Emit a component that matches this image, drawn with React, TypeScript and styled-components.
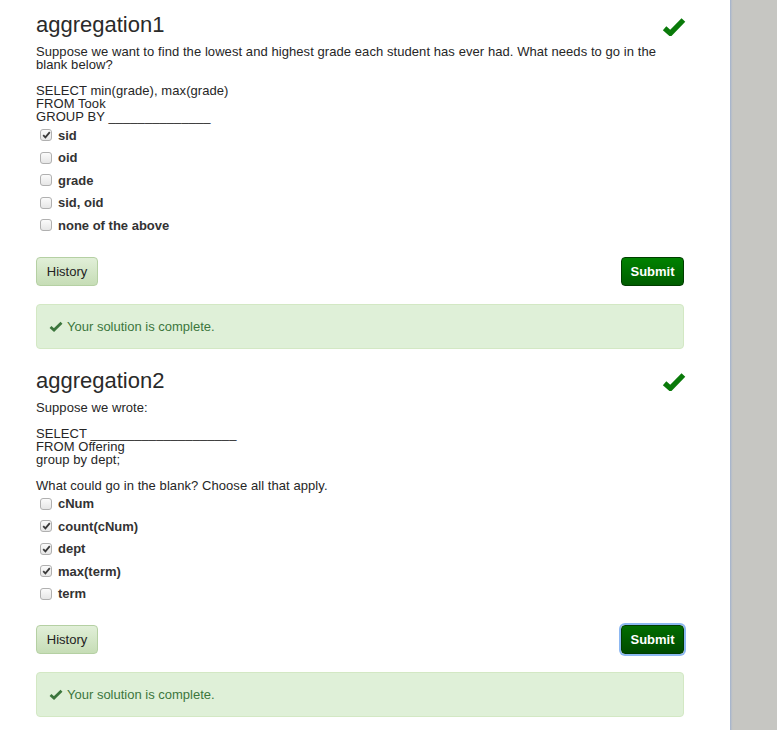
import React from "react";
import styled, { createGlobalStyle } from "styled-components";

const GlobalStyle = createGlobalStyle`
  html, body { margin: 0; padding: 0; }
  body {
    font-family: "Liberation Sans", Arial, Helvetica, sans-serif;
    color: #333;
    background: #c6c6c2;
  }
`;

const Page = styled.div`
  display: flex;
  min-height: 730px;
  height: 730px;
  overflow: hidden;
`;

const Main = styled.main`
  width: 730px;
  flex: none;
  box-sizing: border-box;
  background: #fff;
  padding: 0 46px 0 36px;
  display: flex;
  flex-direction: column;
  gap: 7px;
`;

const Sidebar = styled.aside`
  flex: 1;
  background: linear-gradient(to right, #9fb1cf 0, #b2bbc9 1px, #c1c3c4 2px, #c6c6c2 3px);
`;

const Question = styled.section`
  display: flex;
  flex-direction: column;
`;

const Header = styled.div`
  display: flex;
  align-items: center;
  justify-content: space-between;
  margin-top: 12px;
  height: 26px;
`;

const Title = styled.h3`
  margin: 0;
  font-size: 22px;
  line-height: 26px;
  font-weight: 400;
  color: #2a2a2a;
`;

const DoneIcon = styled.svg`
  width: 24px;
  height: 19px;
  margin-right: -2px;
  margin-top: 2px;
`;

const Prompt = styled.div`
  margin-top: 7px;
  font-size: 13px;
  line-height: 13px;
  letter-spacing: 0.07px;
  white-space: pre-line;
  color: #262626;
`;

const Options = styled.div`
  margin-top: 1px;
  display: flex;
  flex-direction: column;
`;

const Option = styled.label`
  display: flex;
  align-items: center;
  gap: 6px;
  height: 22.5px;
  padding-left: 4px;
  font-size: 13px;
  font-weight: 700;
  color: #333;
`;

const Box = styled.span`
  width: 12px;
  height: 12px;
  box-sizing: border-box;
  border: 1px solid #b0b0b0;
  border-radius: 3px;
  background: linear-gradient(#fbfbfb, #e6e6e6);
  display: flex;
  align-items: center;
  justify-content: center;
`;

const ButtonRow = styled.div`
  margin-top: 20px;
  display: flex;
  justify-content: space-between;
  align-items: center;
`;

const HistoryButton = styled.button`
  height: 29px;
  width: 62px;
  box-sizing: border-box;
  border: 1px solid #b5d0a3;
  border-radius: 4px;
  background: linear-gradient(#e1efd8, #c6ddb6);
  color: #222;
  font-family: inherit;
  font-size: 13px;
  padding: 0;
`;

const SubmitButton = styled.button<{ $focused?: boolean }>`
  height: 29px;
  width: 63px;
  box-sizing: border-box;
  border: 1px solid #003d00;
  border-radius: 4px;
  background: ${(p) =>
    p.$focused ? "linear-gradient(#006d00, #004a00)" : "linear-gradient(#008200, #005d00)"};
  box-shadow: ${(p) => (p.$focused ? "0 0 0 2px #8db8f2" : "none")};
  color: #fff;
  font-family: inherit;
  font-weight: 700;
  font-size: 13px;
  padding: 0;
`;

const Alert = styled.div`
  margin-top: 18px;
  box-sizing: border-box;
  height: 45px;
  border: 1px solid #d3e8c4;
  border-radius: 4px;
  background: #dff0d8;
  color: #3c763d;
  font-size: 13px;
  display: flex;
  align-items: center;
  gap: 4px;
  padding: 0 12px;
`;

const SmallCheck = styled.svg`
  width: 14px;
  height: 11px;
`;

type Opt = { label: string; checked: boolean };

const CheckMark = () => (
  <svg width="9" height="8" viewBox="0 0 9 8">
    <polyline points="1.2,4.2 3.4,6.4 7.8,1.2" fill="none" stroke="#3a3a3a" strokeWidth="1.8" />
  </svg>
);

const QuestionBlock = ({
  title,
  prompt,
  options,
  focused,
}: {
  title: string;
  prompt: string;
  options: Opt[];
  focused?: boolean;
}) => (
  <Question>
    <Header>
      <Title>{title}</Title>
      <DoneIcon viewBox="0 0 24 19">
        <polyline
          points="2.6,11.2 8.4,16.4 21.4,3"
          fill="none"
          stroke="#0a7a0a"
          strokeWidth="5.2"
          strokeLinejoin="miter"
        />
      </DoneIcon>
    </Header>
    <Prompt>{prompt}</Prompt>
    <Options>
      {options.map((o) => (
        <Option key={o.label}>
          <Box>{o.checked && <CheckMark />}</Box>
          {o.label}
        </Option>
      ))}
    </Options>
    <ButtonRow>
      <HistoryButton>History</HistoryButton>
      <SubmitButton $focused={focused}>Submit</SubmitButton>
    </ButtonRow>
    <Alert>
      <SmallCheck viewBox="0 0 14 11">
        <polyline points="1.5,6 5,9 12.5,1.8" fill="none" stroke="#3c763d" strokeWidth="2.8" />
      </SmallCheck>
      Your solution is complete.
    </Alert>
  </Question>
);

export default function App() {
  return (
    <>
      <GlobalStyle />
      <Page>
        <Main>
          <QuestionBlock
            title="aggregation1"
            prompt={
              "Suppose we want to find the lowest and highest grade each student has ever had. What needs to go in the blank below?\n\nSELECT min(grade), max(grade)\nFROM Took\nGROUP BY ______________"
            }
            options={[
              { label: "sid", checked: true },
              { label: "oid", checked: false },
              { label: "grade", checked: false },
              { label: "sid, oid", checked: false },
              { label: "none of the above", checked: false },
            ]}
          />
          <QuestionBlock
            title="aggregation2"
            prompt={
              "Suppose we wrote:\n\nSELECT ____________________\nFROM Offering\ngroup by dept;\n\nWhat could go in the blank? Choose all that apply."
            }
            options={[
              { label: "cNum", checked: false },
              { label: "count(cNum)", checked: true },
              { label: "dept", checked: true },
              { label: "max(term)", checked: true },
              { label: "term", checked: false },
            ]}
            focused
          />
        </Main>
        <Sidebar />
      </Page>
    </>
  );
}
